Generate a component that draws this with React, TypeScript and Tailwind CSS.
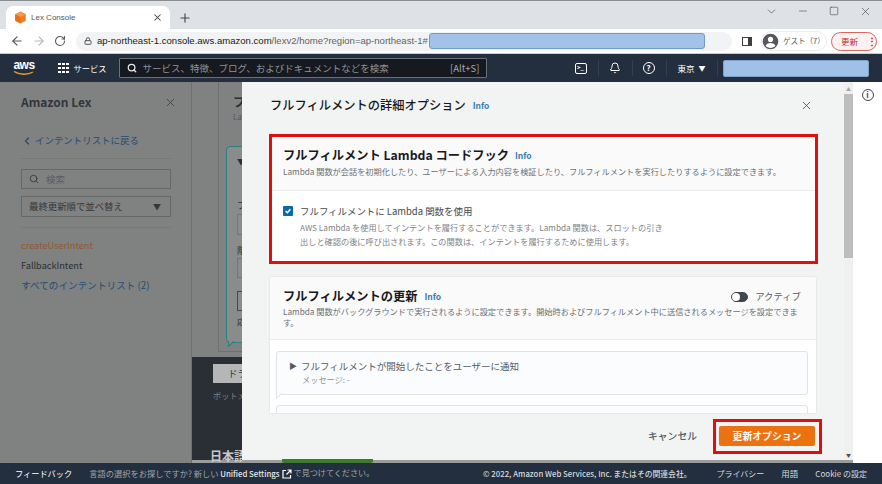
import React from "react";
import { ArrowLeft, ArrowRight, RotateCw, Lock, X, Plus, ChevronDown, Minus, Square, Search, Bell, ChevronLeft } from "lucide-react";

const Info = ({ className = "" }: { className?: string }) => (
  <span className={`text-[8.500px] font-bold text-[#3b7cb0] ${className}`}>Info</span>
);

function TabStrip() {
  return (
    <div className="h-[29px] bg-[#dee1e6] border-t border-[#8a8d91] flex items-end pl-[6px] shrink-0">
      <div className="w-[164px] h-[23px] bg-white rounded-t-[7px] flex items-center pl-[8px] pr-[7px]">
        <svg width="13" height="13" viewBox="0 0 16 16" className="shrink-0">
          <path d="M8 0.5 14.5 4v8L8 15.5 1.500 12V4z" fill="#ee7d22" />
          <path d="M8 0.5 14.5 4 8 7.500 1.500 4z" fill="#f59b4a" />
          <path d="M8 7.500V15.500L1.500 12V4z" fill="#e56f1a" />
        </svg>
        <span className="ml-[4px] text-[8px] text-[#55585c] flex-1 font-['Liberation_Sans',sans-serif]">Lex Console</span>
        <X size={11} strokeWidth={2.2} className="text-[#44474b]" />
      </div>
      <div className="h-[23px] w-[30px] flex items-center justify-center">
        <Plus size={14} strokeWidth={2} className="text-[#44474b]" />
      </div>
      <div className="flex-1" />
      <div className="h-[20px] self-start flex items-center text-[#44474b]">
        <ChevronDown size={13} strokeWidth={1.2} className="mr-[19px]" />
        <Minus size={12} strokeWidth={1.2} className="mr-[20px]" />
        <Square size={10} strokeWidth={1.4} className="mr-[20px]" />
        <X size={13} strokeWidth={1.2} className="mr-[10px]" />
      </div>
    </div>
  );
}

function AddressBar() {
  return (
    <div className="h-[25px] bg-white flex items-center pl-[10px] shrink-0 border-b border-[#c9cbce]">
      <ArrowLeft size={14} strokeWidth={2} className="text-[#55585c]" />
      <ArrowRight size={14} strokeWidth={2} className="text-[#b5b7ba] ml-[8px]" />
      <RotateCw size={12} strokeWidth={2.2} className="text-[#55585c] ml-[8px]" />
      <div className="ml-[10px] w-[656px] h-[19px] rounded-full bg-[#f1f3f4] flex items-center pl-[8px]">
        <Lock size={8} strokeWidth={3} className="text-[#55585c] shrink-0" />
        <span className="ml-[5px] text-[9.550px] text-[#222] whitespace-nowrap font-['Liberation_Sans',sans-serif]">ap-northeast-1.console.aws.amazon.com<span className="text-[#5f6368]">/lexv2/home?region=ap-northeast-1#</span></span>
        <div className="ml-px w-[276px] h-[16px] rounded-[3px] bg-[#a3c2e8] border border-[#6f9ac9] shrink-0" />
      </div>
      <div className="ml-[10px] w-[10px] h-[9px] border border-[#3c4043] border-r-[4px] box-border shrink-0" />
      <div className="ml-[9px] h-[20px] w-[66px] rounded-full flex items-center bg-white border border-[#eceded] shrink-0">
        <svg width="17" height="17" viewBox="0 0 24 24" className="shrink-0">
          <circle cx="12" cy="12" r="11" fill="#55585c" />
          <circle cx="12" cy="9" r="3.600" fill="#fff" />
          <path d="M5 18c1.500-3 4.500-4 7-4s5.500 1 7 4c-1.800 2-4.200 3-7 3s-5.200-1-7-3z" fill="#fff" />
        </svg>
        <span className="ml-[4px] text-[7.500px] text-[#55585c] whitespace-nowrap">ゲスト（7）</span>
      </div>
      <div className="ml-[4px] h-[19px] w-[46px] rounded-full border border-[#d9675f] bg-[#fcf1f0] flex items-center pl-[9px] shrink-0">
        <span className="text-[8.500px] text-[#c5221f] whitespace-nowrap">更新</span>
        <span className="ml-[9px] text-[#c5221f] text-[10px] font-bold leading-none">⋮</span>
      </div>
    </div>
  );
}

function AwsHeader() {
  const Divider = ({ className = "" }: { className?: string }) => <span className={`w-px h-[16px] bg-[#35404e] shrink-0 ${className}`} />;
  return (
    <div className="h-[28px] bg-[#232f3e] flex items-center shrink-0 text-white">
      <div className="ml-[13px] w-[22px] flex flex-col items-center">
        <span className="text-[12px] font-bold leading-[11px] tracking-[-0.5px] font-['Liberation_Sans',sans-serif]">aws</span>
        <svg width="22" height="5" viewBox="0 0 22 5"><path d="M1 0.500C6 4 15 4 20 1" fill="none" stroke="#f29a1f" strokeWidth="1.400" /></svg>
      </div>
      <div className="ml-[23px] grid grid-cols-3 gap-[1.500px]">
        {Array.from({ length: 9 }).map((_, i) => <span key={i} className="w-[2.500px] h-[2.500px] bg-white" />)}
      </div>
      <span className="ml-[5px] text-[8.250px] whitespace-nowrap">サービス</span>
      <div className="ml-[12px] w-[368px] h-[20px] bg-[#16191f] border border-[#687078] rounded-[1px] flex items-center pl-[7px] pr-[6px] shrink-0">
        <Search size={10} strokeWidth={3} className="text-[#e8e8e8]" />
        <span className="ml-[6px] text-[9.500px] text-[#8d9399] flex-1 whitespace-nowrap">サービス、特徴、ブログ、およびドキュメントなどを検索</span>
        <span className="text-[9.500px] text-[#a5aab0]">[Alt+S]</span>
      </div>
      <div className="ml-[88px] w-[12px] h-[11px] border-[1.500px] border-white rounded-[2px] flex items-center justify-center text-[6px] font-bold leading-none shrink-0">&gt;_</div>
      <Divider className="ml-[11px]" />
      <Bell size={12} strokeWidth={2} className="ml-[10px] shrink-0" />
      <Divider className="ml-[11px]" />
      <div className="ml-[10px] w-[12px] h-[12px] rounded-full border-[1.500px] border-white flex items-center justify-center text-[8px] font-bold leading-none shrink-0">?</div>
      <Divider className="ml-[11px]" />
      <span className="ml-[11px] text-[8.500px] whitespace-nowrap">東京</span>
      <span className="ml-[4px] text-[7px]">▼</span>
      <Divider className="ml-[11px]" />
      <div className="ml-[5px] w-[146px] h-[17px] rounded-[2px] bg-[#9fc1e8] border border-[#7ea3cb] shrink-0" />
    </div>
  );
}

function Sidebar() {
  return (
    <div className="w-[192px] shrink-0 bg-[#808181] border-r border-[#6f7070] pl-[21px] pr-[20px] text-[#2b2f33]">
      <div className="h-[41px] flex items-center justify-between pb-[1px] -mr-[6px]">
        <span className="text-[12px] font-bold text-[#33373b]">Amazon Lex</span>
        <X size={13} strokeWidth={1.500} className="text-[#3a3e42]" />
      </div>
      <div className="flex items-center h-[36px] text-[9.450px] text-[#1f4e70] border-b border-[#767777]">
        <ChevronLeft size={12} strokeWidth={2.500} />
        <span className="ml-[2px]">インテントリストに戻る</span>
      </div>
      <div className="mt-[10px] h-[20px] border border-[#666767] flex items-center pl-[7px]">
        <Search size={10} strokeWidth={2} className="text-[#33373b]" />
        <span className="ml-[7px] text-[9.500px] text-[#5b5d5f]">検索</span>
      </div>
      <div className="mt-[7px] h-[21px] border border-[#666767] flex items-center pl-[7px] pr-[9px] justify-between">
        <span className="text-[9.400px] text-[#33373b]">最終更新順で並べ替え</span>
        <span className="text-[8px] text-[#33373b]">▼</span>
      </div>
      <div className="mt-[10px] border-t border-[#767777] pt-[7px] text-[9.200px] leading-[20px]">
        <div className="text-[#8e5a34]">createUserIntent</div>
        <div className="text-[#2c3033]">FallbackIntent</div>
        <div className="text-[#1f4e70] text-[9.650px]">すべてのインテントリスト (2)</div>
      </div>
    </div>
  );
}

function Behind() {
  return (
    <div className="flex-1 flex min-w-0">
      <Sidebar />
      <div className="flex-1 flex flex-col bg-[#808181] min-w-0 overflow-hidden">
        <div className="flex-1 min-h-0 ml-[26px] mb-[5px] border-l border-b border-[#6f7070] flex flex-col">
          <div className="h-[64px] pl-[14px] pt-[12px] shrink-0">
            <div className="text-[12.250px] font-bold text-[#2b2f33] leading-[16px]">フ</div>
            <div className="text-[8px] text-[#55585a] mt-[1px]">La</div>
          </div>
          <div className="relative ml-[7px] h-[197px] bg-[#8a8b8b] border-[1.500px] border-[#2f8080] rounded-[4px] pl-[10px] pt-[10px] text-[#2b2f33] text-[8px] shrink-0">
            <div className="text-[8px] leading-[10px]">▼</div>
            <div className="mt-[34px] leading-[10px] text-[9px]">フ</div>
            <div className="mt-[3px] h-[21px] w-[60px] border border-[#747575]" />
            <div className="mt-[11px] leading-[10px] text-[9px]">階</div>
            <div className="mt-[2px] h-[20px] w-[60px] border border-[#747575]" />
            <div className="mt-[13px] h-[20px] w-[60px] border border-[#45484a]" />
            <div className="mt-[6px] leading-[10px]">応</div>
            <svg width="8" height="6" viewBox="0 0 8 6" className="absolute left-[1px] -bottom-[5px]">
              <path d="M0.500 0V5.500L6 0" fill="#8a8b8b" stroke="#2f8080" strokeWidth="1.200" />
            </svg>
          </div>
        </div>
        <div className="h-[103px] bg-[#2a2f36] pl-[21px] pt-[7px] shrink-0 relative">
          <div className="w-[60px] h-[19px] bg-[#b5b6b7] text-[9.500px] text-[#33373b] pl-[15px] leading-[19px]">ドラ</div>
          <div className="text-[8.200px] text-[#7d8084] mt-[6px] whitespace-nowrap">ボットメ</div>
          <div className="absolute left-[18px] bottom-0 text-[12px] font-bold text-[#c8c9ca] leading-[9px] whitespace-nowrap">日本語</div>
        </div>
        <div className="h-[3px] bg-[#9a9b9b] shrink-0" />
      </div>
    </div>
  );
}

function Modal() {
  return (
    <div className="absolute left-[242px] top-0 w-[611px] h-[381px] bg-[#f2f3f3] flex flex-col border-b-[3px] border-[#9a9b9b] pr-[9px]">
      <div className="h-[48px] shrink-0 flex items-center pl-[28px] pr-[31px] pb-[1px]">
        <span className="text-[12.250px] font-medium text-[#16191f] whitespace-nowrap">フルフィルメントの詳細オプション</span>
        <Info className="ml-[7px]" />
        <span className="flex-1" />
        <X size={13} strokeWidth={1.500} className="text-[#44484d]" />
      </div>
      <div className="h-[130px] shrink-0 ml-[27px] mr-[26px] border-[3px] border-[#e00f0f] mt-[4px] bg-white">
        <div className="h-[54px] bg-[#fafafa] border-b border-[#e9ebed] pl-[11px] pt-[9px]">
          <div className="flex items-center leading-[18px]">
            <span className="text-[12.250px] font-bold text-[#16191f]">フルフィルメント Lambda コードフック</span>
            <Info className="ml-[6px]" />
          </div>
          <div className="text-[8.200px] text-[#687078] leading-[14px] whitespace-nowrap">Lambda 関数が会話を初期化したり、ユーザーによる入力内容を検証したり、フルフィルメントを実行したりするように設定できます。</div>
        </div>
        <div className="flex pl-[11px] pt-[13px]">
          <span className="mt-[2px] w-[10px] h-[10px] rounded-[1px] bg-[#0a6aa8] flex items-center justify-center shrink-0">
            <svg width="8" height="8" viewBox="0 0 10 10"><path d="M2 5 4.200 7.200 8 2.800" fill="none" stroke="#fff" strokeWidth="1.800" /></svg>
          </span>
          <div className="ml-[7px]">
            <div className="text-[9.450px] text-[#44484d] leading-[14px]">フルフィルメントに Lambda 関数を使用</div>
            <div className="text-[8.200px] text-[#7d8388] leading-[14px] mt-[2px] w-[366px]">AWS Lambda を使用してインテントを履行することができます。Lambda 関数は、スロットの引き出しと確認の後に呼び出されます。この関数は、インテントを履行するために使用します。</div>
          </div>
        </div>
      </div>
      <div className="flex-1 min-h-0 overflow-hidden mx-[28px] mt-[13px] bg-white shadow-[0_0_2px_rgba(0,0,0,0.15)] rounded-t-[2px]">
        <div className="h-[63px] bg-[#fafafa] border-b border-[#e9ebed] pl-[13px] pr-[15px] pt-[11px]">
          <div className="flex items-center leading-[17px]">
            <span className="text-[12.250px] font-bold text-[#16191f]">フルフィルメントの更新</span>
            <Info className="ml-[7px]" />
            <span className="flex-1" />
            <span className="w-[17px] h-[10px] rounded-full bg-[#414750] border border-[#414750] flex items-center">
              <span className="w-[8px] h-[8px] rounded-full bg-white ml-0" />
            </span>
            <span className="ml-[7px] text-[9.400px] text-[#545b64]">アクティブ</span>
          </div>
          <div className="text-[8.200px] text-[#687078] leading-[11px] mt-[1px]">Lambda 関数がバックグラウンドで実行されるように設定できます。開始時およびフルフィルメント中に送信されるメッセージを設定できます。</div>
        </div>
        <div className="relative ml-[6px] mr-[8px] mt-[11px] h-[44px] bg-[#fafcfe] border border-[#dfe3e6] rounded-[3px] pl-[12px] pt-[7px]">
          <div className="flex items-center">
            <span className="text-[8px] text-[#545b64]">▶</span>
            <span className="ml-[4px] text-[9.500px] text-[#545b64] leading-[14px] whitespace-nowrap">フルフィルメントが開始したことをユーザーに通知</span>
          </div>
          <div className="ml-[13px] text-[8.200px] text-[#8a9096] leading-[13px]">メッセージ: -</div>
          <svg width="8" height="6" viewBox="0 0 8 6" className="absolute -left-px -bottom-[5px]">
            <path d="M0.500 0V5.500L6 0" fill="#fafcfe" stroke="#dfe3e6" strokeWidth="1" />
          </svg>
        </div>
        <div className="ml-[6px] mr-[8px] mt-[10px] h-[30px] bg-[#fafcfe] border border-[#dfe3e6] rounded-[3px]" />
      </div>
      <div className="h-[47px] shrink-0 flex items-center justify-end pr-[22px] relative">
        <span className="text-[9.800px] font-medium text-[#545b64] mr-[16px] whitespace-nowrap">キャンセル</span>
        <div className="border-[3px] border-[#e00f0f] pl-[3px] pr-[4px] pt-[4px] pb-[5px] flex">
          <button className="w-[96px] h-[20px] bg-[#ec7211] rounded-[2px] text-[9.860px] font-bold text-white whitespace-nowrap">更新オプション</button>
        </div>
      </div>
      <div className="absolute right-0 top-0 bottom-0 w-[9px] bg-[#f0f0f0] flex flex-col items-center">
        <div className="h-[12px] flex items-center justify-center text-[5px] leading-none text-[#a5a5a5]">▲</div>
        <div className="w-full h-[164px] bg-[#bdbdbd]" />
        <div className="flex-1" />
        <div className="h-[12px] flex items-center justify-center text-[5px] leading-none text-[#505050]">▼</div>
      </div>
      <div className="absolute left-[40px] -bottom-[3px] w-[91px] h-[4px] bg-[#3c7a2c] rounded-b-[2px]" />
    </div>
  );
}

function Footer() {
  return (
    <div className="h-[21px] shrink-0 bg-[#232f3e] flex items-center text-[8px] text-[#d5dbdb] pl-[15px] pr-[15px] whitespace-nowrap">
      <span className="text-[8.200px] text-white">フィードバック</span>
      <span className="ml-[17px] text-[8.250px] text-[#a0a6ad]">言語の選択をお探しですか? 新しい <span className="text-[#e8eaec] text-[7.800px] font-medium">Unified Settings</span></span>
      <svg width="10" height="10" viewBox="0 0 10 10" className="ml-[2px]"><path d="M4 1.500H1V9h7.500V6M5.500 1H9v3.500M9 1 4.500 5.500" fill="none" stroke="#fff" strokeWidth="1.200" /></svg>
      <span className="ml-[2px] text-[8.100px] text-[#a0a6ad]">で見つけてください。</span>
      <span className="flex-1" />
      <span className="text-[7.800px] font-medium">© 2022, Amazon Web Services, Inc. またはその関連会社。</span>
      <span className="ml-[25px]">プライバシー</span>
      <span className="ml-[17px] text-[8.500px]">用語</span>
      <span className="ml-[17px]">Cookie の設定</span>
    </div>
  );
}

export default function App() {
  return (
    <div className="w-[882px] h-[484px] overflow-hidden flex flex-col font-['Noto_Sans_CJK_JP','Noto_Sans',sans-serif]">
      <TabStrip />
      <AddressBar />
      <AwsHeader />
      <div className="flex-1 min-h-0 flex relative">
        <Behind />
        <div className="w-[29px] shrink-0 bg-white flex justify-center pt-[7px]">
          <div className="w-[12px] h-[12px] rounded-full border-[1.500px] border-[#3f444a] flex items-center justify-center text-[8px] font-bold text-[#3f444a] leading-none">i</div>
        </div>
        <Modal />
      </div>
      <Footer />
    </div>
  );
}
